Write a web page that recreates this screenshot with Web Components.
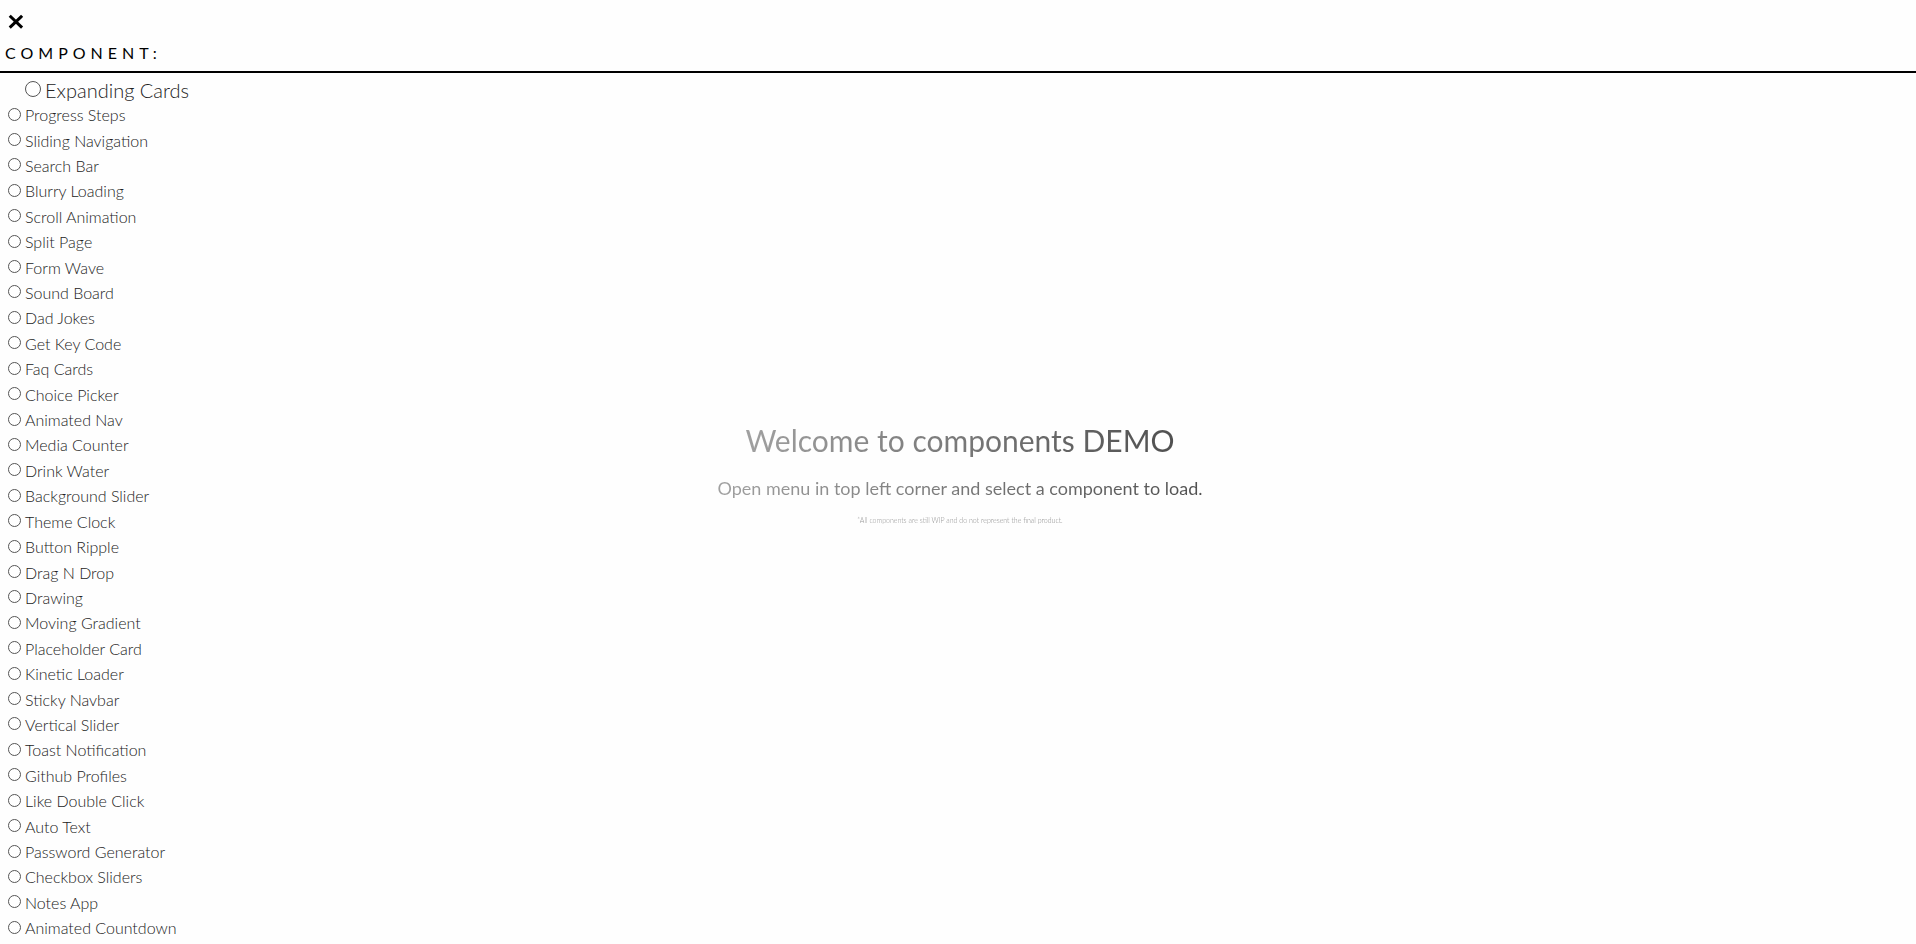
<!DOCTYPE html>
<html lang="en">
<head>
<meta charset="utf-8">
<title>Components demo</title>
<style>
  html, body { margin: 0; height: 100%; }
  body { background: #fefefe; color: #000; font-family: Lato, "Open Sans", sans-serif; }
</style>
</head>
<body>
<demo-app></demo-app>

<template id="app-template">
  <style>
    :host { display: grid; grid-template-rows: auto 1fr; min-height: 100%; }
    main { display: grid; grid-template-columns: 1fr; }
    component-menu, welcome-message { grid-area: 1 / 1; }
    component-menu { justify-self: start; }
    welcome-message { place-self: center; padding: 0 0 70px 4px; }
  </style>
  <menu-header>Component:</menu-header>
  <main>
    <welcome-message>
      <span slot="title">Welcome to components DEMO</span>
      <span slot="lead">Open menu in top left corner and select a component to load.</span>
      <span slot="note">*All components are still WIP and do not represent the final product.</span>
    </welcome-message>
    <component-menu></component-menu>
  </main>
</template>

<template id="header-template">
  <style>
    :host { display: block; border-bottom: 2px solid #000; padding: 12px 5px 8px; }
    button { display: block; width: 20px; height: 20px; margin: 0; padding: 0; border: 0; background: none; cursor: pointer; }
    svg { display: block; width: 20px; height: 20px; }
    h2 { margin: 11px 0 0; font-size: 16px; line-height: 20px; font-weight: 400; letter-spacing: 5px; text-transform: uppercase; }
  </style>
  <button type="button" aria-label="Close menu">
    <svg viewBox="0 0 20 20" aria-hidden="true"><path d="M5.8 4.8 L16 14.6 M16 4.8 L5.8 14.6" fill="none" stroke="#000" stroke-width="3" stroke-linecap="square"/></svg>
  </button>
  <h2><slot></slot></h2>
</template>

<template id="menu-template">
  <style>
    :host { display: grid; grid-auto-rows: 1fr; padding: 3px 8px 4px; }
  </style>
</template>

<template id="option-template">
  <style>
    :host { display: flex; align-items: center; min-height: 25px; }
    label { display: flex; align-items: center; gap: 4px; font-size: 16px; line-height: 20px; font-weight: 300; color: #222; cursor: pointer; white-space: nowrap; }
    span { padding-top: 2px; }
    input { appearance: none; box-sizing: border-box; flex: none; width: 13px; height: 13px; margin: 0; border: 1px solid #555; border-radius: 50%; background: #fff; }
    input:checked { background: #000; }
    :host([active]) label { margin-left: 17px; font-size: 20px; }
    :host([active]) input { width: 16px; height: 16px; }
  </style>
  <label><input type="radio" name="component"><span><slot></slot></span></label>
</template>

<template id="welcome-template">
  <style>
    :host { display: flex; flex-direction: column; align-items: center; text-align: center; }
    h1, p { margin: 0; color: transparent; background: linear-gradient(to right, #a0a0a0, #505050) text; }
    h1 { font-size: 30px; line-height: 40px; font-weight: 400; }
    .lead { margin-top: 16px; font-size: 18px; line-height: 24px; }
    .note { margin-top: 12px; font-size: 7px; line-height: 16px; font-weight: 300; background-image: linear-gradient(to right, #909090, #808080); }
  </style>
  <h1><slot name="title"></slot></h1>
  <p class="lead"><slot name="lead"></slot></p>
  <p class="note"><slot name="note"></slot></p>
</template>

<script>
  const COMPONENTS = [
    "Expanding Cards", "Progress Steps", "Sliding Navigation", "Search Bar", "Blurry Loading",
    "Scroll Animation", "Split Page", "Form Wave", "Sound Board", "Dad Jokes", "Get Key Code",
    "Faq Cards", "Choice Picker", "Animated Nav", "Media Counter", "Drink Water",
    "Background Slider", "Theme Clock", "Button Ripple", "Drag N Drop", "Drawing",
    "Moving Gradient", "Placeholder Card", "Kinetic Loader", "Sticky Navbar", "Vertical Slider",
    "Toast Notification", "Github Profiles", "Like Double Click", "Auto Text",
    "Password Generator", "Checkbox Sliders", "Notes App", "Animated Countdown"
  ];

  class TemplateElement extends HTMLElement {
    constructor() {
      super();
      const template = document.getElementById(this.constructor.template);
      this.attachShadow({ mode: "open" }).append(template.content.cloneNode(true));
    }
  }

  class MenuHeader extends TemplateElement { static template = "header-template"; }
  class WelcomeMessage extends TemplateElement { static template = "welcome-template"; }
  class MenuOption extends TemplateElement { static template = "option-template"; }

  class ComponentMenu extends TemplateElement {
    static template = "menu-template";
    connectedCallback() {
      if (this.shadowRoot.querySelector("menu-option")) return;
      COMPONENTS.forEach((name, index) => {
        const option = document.createElement("menu-option");
        option.textContent = name;
        option.toggleAttribute("active", index === 0);
        this.shadowRoot.append(option);
      });
    }
  }

  class DemoApp extends TemplateElement { static template = "app-template"; }

  customElements.define("menu-header", MenuHeader);
  customElements.define("welcome-message", WelcomeMessage);
  customElements.define("menu-option", MenuOption);
  customElements.define("component-menu", ComponentMenu);
  customElements.define("demo-app", DemoApp);
</script>
</body>
</html>
